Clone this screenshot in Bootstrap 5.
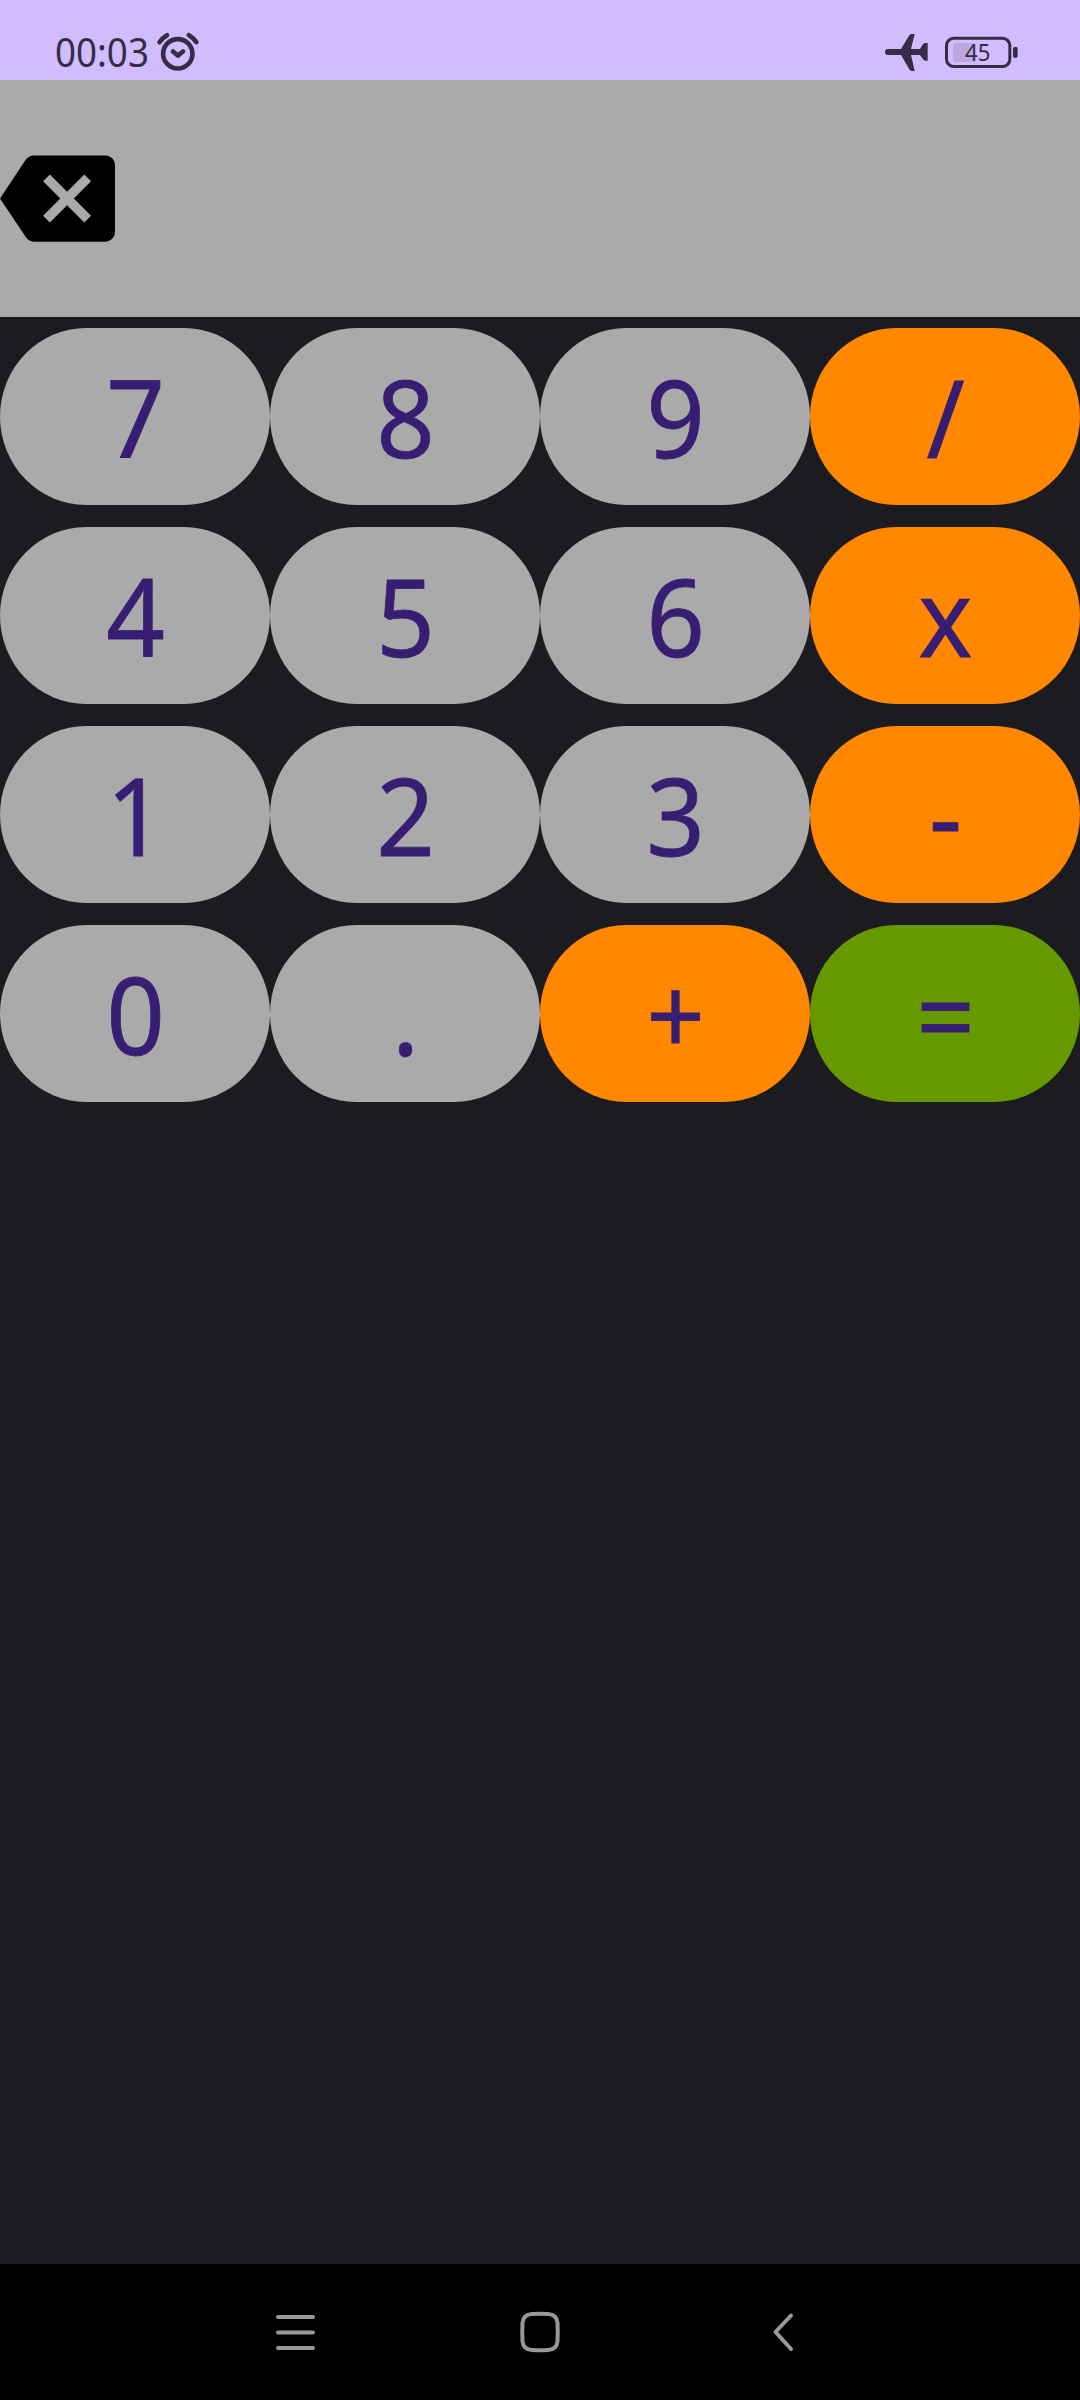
<!DOCTYPE html>
<html lang="en">
<head>
<meta charset="utf-8">
<meta name="viewport" content="width=device-width, initial-scale=1">
<title>Calculator</title>
<link href="https://cdn.jsdelivr.net/npm/bootstrap@5.3.0/dist/css/bootstrap.min.css" rel="stylesheet">
<style>
  body { background: #1c1b1f; font-family: "Noto Sans", "Open Sans", sans-serif; }
  .phone { width: 1080px; height: 2400px; }
  .status-bar { height: 80px; background: #d0bcff; color: #352d45; padding: 24px 60px 0 55px; }
  .clock { font-size: 39.5px; line-height: 56px; width: 100px; transform: scaleX(.93); transform-origin: left; }
  .display { height: 237px; background: #aaa; }
  .keypad { padding-top: 11px; row-gap: 22px; }
  .key { --bs-btn-padding-x: 0; --bs-btn-padding-y: 0; --bs-btn-color: #381e72; --bs-btn-font-size: 108px;
         --bs-btn-line-height: 177px; --bs-btn-border-width: 0; height: 177px; background: #aaa;
         border-radius: 86px / 88.5px; }
  .key span { display: block; transform: scaleX(.95); -webkit-text-stroke: .8px #381e72; padding-left: 1px; }
  .key-op { background: #f80; }
  .key-eq { background: #690; }
  .nav-keys { height: 136px; background: #000; color: #999; padding: 0 273px; }
  svg { display: block; flex: none; }
</style>
</head>
<body>
<div class="phone d-flex flex-column overflow-hidden">
  <header class="status-bar d-flex justify-content-between align-items-start">
    <div class="d-flex">
      <div class="clock text-nowrap">00:03</div>
      <svg width="46" height="46" viewBox="155 24 46 46" overflow="visible" fill="none" stroke="currentColor" stroke-width="4.6" stroke-linecap="round" stroke-linejoin="round">
        <circle cx="177.8" cy="53.8" r="14.7"/>
        <path d="M159.5 42.2Q162.5 37.8 167 35.2M188.8 35.2Q193.5 37.8 196.4 42.2M173 51.5L177.8 55.6L183 51.5"/>
      </svg>
    </div>
    <svg width="135" height="46" viewBox="45 12 405 138" overflow="visible">
      <path fill="currentColor" d="M54 87H93L118 46Q121 42 125 42H134L123 87H150L159 73Q162 69 166 69H173V122H166Q162 122 159 118L150 105H123L134 153H125Q121 153 118 148L93 105H54A9 9 0 0 1 54 87Z"/>
      <rect x="249" y="69" width="69" height="57" rx="7" fill="#bba8e3"/>
      <rect x="229.5" y="54.5" width="190" height="85" rx="22" fill="none" stroke="currentColor" stroke-width="9"/>
      <rect x="429" y="80" width="14" height="34" rx="7" fill="currentColor"/>
      <text x="323" y="123" font-size="71" textLength="76" lengthAdjust="spacingAndGlyphs" text-anchor="middle" fill="currentColor">45</text>
    </svg>
  </header>

  <section class="display d-flex align-items-center">
    <svg width="115" height="115" viewBox="0 0 24 24" aria-label="Backspace"><path d="M22 3H7c-.69 0-1.23.35-1.59.88L0 12l5.41 8.11c.36.53.9.89 1.59.89h15c1.1 0 2-.9 2-2V5c0-1.1-.9-2-2-2zm-3 12.59L17.59 17 14 13.41 10.41 17 9 15.59 12.59 12 9 8.41 10.41 7 14 10.59 17.59 7 19 8.41 15.41 12 19 15.59z"/></svg>
  </section>

  <main class="keypad row g-0 flex-grow-1 align-content-start">
    <div class="col-3"><button class="btn key w-100"><span>7</span></button></div>
    <div class="col-3"><button class="btn key w-100"><span>8</span></button></div>
    <div class="col-3"><button class="btn key w-100"><span>9</span></button></div>
    <div class="col-3"><button class="btn key key-op w-100"><span>/</span></button></div>
    <div class="col-3"><button class="btn key w-100"><span>4</span></button></div>
    <div class="col-3"><button class="btn key w-100"><span>5</span></button></div>
    <div class="col-3"><button class="btn key w-100"><span>6</span></button></div>
    <div class="col-3"><button class="btn key key-op w-100"><span>x</span></button></div>
    <div class="col-3"><button class="btn key w-100"><span>1</span></button></div>
    <div class="col-3"><button class="btn key w-100"><span>2</span></button></div>
    <div class="col-3"><button class="btn key w-100"><span>3</span></button></div>
    <div class="col-3"><button class="btn key key-op w-100"><span>-</span></button></div>
    <div class="col-3"><button class="btn key w-100"><span>0</span></button></div>
    <div class="col-3"><button class="btn key w-100"><span>.</span></button></div>
    <div class="col-3"><button class="btn key key-op w-100"><span>+</span></button></div>
    <div class="col-3"><button class="btn key key-eq w-100"><span>=</span></button></div>
  </main>

  <nav class="nav-keys d-flex justify-content-between align-items-center" aria-label="System">
    <svg width="46" height="46" viewBox="0 0 46 46" fill="none" stroke="currentColor" stroke-width="4" stroke-linecap="round"><path d="M5 8H40M5 23.5H40M5 39H40"/></svg>
    <svg width="46" height="46" viewBox="0 0 46 46" fill="none" stroke="currentColor" stroke-width="4"><path d="M15 5Q23 4.500 31 5Q40 5.500 40.500 14Q41 23 40.500 32Q40 40.500 31 41Q23 41.500 15 41Q6 40.500 5.500 32Q5 23 5.500 14Q6 5.500 15 5Z"/></svg>
    <svg width="46" height="46" viewBox="0 0 46 46" fill="none" stroke="currentColor" stroke-width="4" stroke-linecap="round" stroke-linejoin="round"><path d="M30 6.500L14.500 23L30 40"/></svg>
  </nav>
</div>
<script src="https://cdn.jsdelivr.net/npm/bootstrap@5.3.0/dist/js/bootstrap.bundle.min.js"></script>
</body>
</html>
